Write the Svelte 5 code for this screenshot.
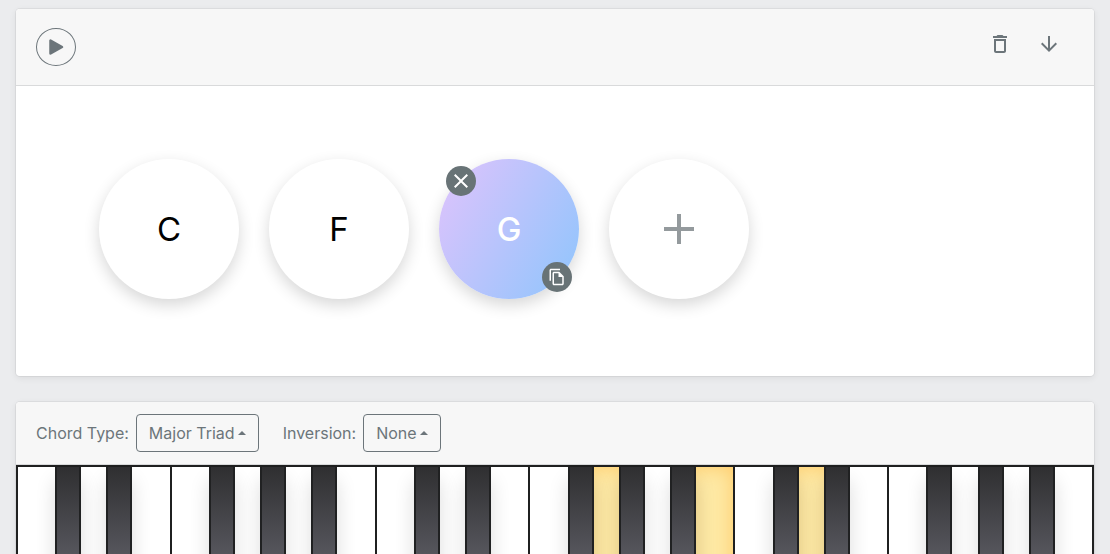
<script lang="ts">
	type Chord = { root: string; notes: number[] }

	const whiteKeys = Array.from({ length: 21 }, (_, i) => i)
	const chordTypes = ['Major Triad', 'Minor Triad', 'Diminished', 'Augmented']
	const inversions = ['None', 'First', 'Second']

	let chords: Chord[] = $state([
		{ root: 'C', notes: [7, 9, 11] },
		{ root: 'F', notes: [10, 12, 14] },
		{ root: 'G', notes: [11, 13, 15] }
	])
	let selected = $state(2)
	let chordType = $state('Major Triad')
	let inversion = $state('None')

	let activeNotes = $derived(chords[selected]?.notes ?? [])

	// E and B have no sharp
	const hasSharp = (key: number) => key % 7 !== 2 && key % 7 !== 6

	function add() {
		chords.push({ root: 'C', notes: [7, 9, 11] })
	}

	function remove(index: number) {
		chords.splice(index, 1)
		selected = Math.max(0, index - 1)
	}

	function duplicate(index: number) {
		chords.splice(index + 1, 0, { ...chords[index] })
	}
</script>

<main>
	<section class="card">
		<header class="toolbar">
			<button class="play" aria-label="Play">
				<svg width="16" height="18" viewBox="0 0 16 18">
					<path d="M2.500 2.500v13L14 9z" fill="currentColor" stroke="currentColor" stroke-width="2.500" stroke-linejoin="round" />
				</svg>
			</button>
			<div class="actions">
				<button class="icon" aria-label="Delete">
					<svg width="24" height="24" viewBox="0 0 24 24" fill="currentColor">
						<path d="M6 19c0 1.100.9 2 2 2h8c1.100 0 2-.9 2-2V7H6v12zM8 9h8v10H8V9zm7.500-5-1-1h-5l-1 1H5v2h14V4z" />
					</svg>
				</button>
				<button class="icon" aria-label="Move down">
					<svg width="24" height="24" viewBox="0 0 24 24" fill="currentColor">
						<path d="m20 12-1.410-1.410L13 16.170V4h-2v12.170l-5.580-5.590L4 12l8 8z" />
					</svg>
				</button>
			</div>
		</header>
		<div class="chords">
			{#each chords as chord, i}
				<div class="chord">
					<button class="circle" class:selected={i === selected} onclick={() => (selected = i)}>{chord.root}</button>
					{#if i === selected}
						<button class="badge close" aria-label="Remove chord" onclick={() => remove(i)}>
							<svg width="24" height="24" viewBox="0 0 24 24" fill="currentColor">
								<path d="M19 6.410 17.590 5 12 10.590 6.410 5 5 6.410 10.590 12 5 17.590 6.410 19 12 13.410 17.590 19 19 17.590 13.410 12z" />
							</svg>
						</button>
						<button class="badge copy" aria-label="Duplicate chord" onclick={() => duplicate(i)}>
							<svg width="18" height="18" viewBox="0 0 24 24" fill="currentColor">
								<path d="M16 1H4c-1.100 0-2 .9-2 2v14h2V3h12V1zm-1 4H8c-1.100 0-1.990.9-1.990 2L6 21c0 1.100.89 2 1.990 2H19c1.100 0 2-.9 2-2V11l-6-6zM8 21V7h6v5h5v9H8z" />
							</svg>
						</button>
					{/if}
				</div>
			{/each}
			<button class="circle add" aria-label="Add chord" onclick={add}>
				<svg width="30" height="30" viewBox="0 0 30 30">
					<path d="M15 0v30M0 15h30" stroke="currentColor" stroke-width="4" />
				</svg>
			</button>
		</div>
	</section>

	<section class="card">
		<header class="options">
			<div class="field">
				<label for="chord-type">Chord Type:</label>
				<span class="dropdown">
					<select id="chord-type" bind:value={chordType}>
						{#each chordTypes as option}
							<option>{option}</option>
						{/each}
					</select>
				</span>
			</div>
			<div class="field">
				<label for="inversion">Inversion:</label>
				<span class="dropdown">
					<select id="inversion" bind:value={inversion}>
						{#each inversions as option}
							<option>{option}</option>
						{/each}
					</select>
				</span>
			</div>
		</header>
		<div class="piano">
			{#each whiteKeys as key}
				<div class="slot">
					<button class="white" class:active={activeNotes.includes(key)} aria-label="White key {key + 1}"></button>
					{#if hasSharp(key) && key < 20}
						<button class="black" aria-label="Black key {key + 1}"></button>
					{/if}
				</div>
			{/each}
		</div>
	</section>
</main>

<style>
	:global(body) {
		background: #ebecee;
	}

	main {
		box-sizing: border-box;
		color: #6c757a;
		display: flex;
		flex-direction: column;
		font-family: Inter, 'Liberation Sans', sans-serif;
		font-size: 16px;
		gap: 24px;
		height: 100vh;
		line-height: 24px;
		overflow: hidden;
		padding: 8px 15px 0;
	}

	button,
	select {
		box-sizing: border-box;
		color: inherit;
		cursor: pointer;
		font: inherit;
		margin: 0;
	}

	button {
		align-items: center;
		background: none;
		border: 0;
		display: flex;
		justify-content: center;
		padding: 0;
	}

	.card {
		background: #fff;
		background-clip: padding-box;
		border: 1px solid rgba(0, 0, 0, 0.05);
		border-radius: 5px;
		box-shadow: 0 2px 6px rgba(0, 0, 0, 0.06);
		flex-shrink: 0;
	}

	.toolbar,
	.options {
		background: #f7f7f7;
		border-bottom: 1px solid #d9dadb;
		border-radius: 4px 4px 0 0;
		display: flex;
	}

	.toolbar {
		justify-content: space-between;
		padding: 19px 20px;
	}

	.play {
		border: 1px solid #6c757a;
		border-radius: 50%;
		height: 38px;
		width: 40px;
	}

	.actions {
		display: flex;
		gap: 25px;
		padding-right: 13px;
	}

	.icon {
		height: 32px;
	}

	.chords {
		display: flex;
		flex-wrap: wrap;
		gap: 30px;
		padding: 73px 83px 77px;
	}

	.chord {
		position: relative;
	}

	.circle {
		background: #fff;
		border-radius: 50%;
		box-shadow: 0 6px 16px rgba(0, 0, 0, 0.16);
		color: #000;
		font-size: 33px;
		height: 140px;
		width: 140px;
	}

	.circle.selected {
		background: linear-gradient(120deg, #e0c3fc 0%, #8ec5fc 100%);
		color: #fff;
		font-weight: 500;
	}

	.circle.add {
		color: #949a9d;
	}

	.badge {
		background: #687376;
		border-radius: 50%;
		color: #fff;
		height: 30px;
		position: absolute;
		width: 30px;
	}

	.close {
		left: 7px;
		top: 7px;
	}

	.copy {
		bottom: 7px;
		right: 7px;
	}

	.options {
		flex-wrap: wrap;
		gap: 24px;
		padding: 12px 20px;
	}

	.field {
		align-items: center;
		display: flex;
		gap: 7px;
	}

	.dropdown {
		position: relative;
	}

	.dropdown::after {
		border: 4px solid transparent;
		border-bottom-color: currentColor;
		border-top: 0;
		content: '';
		pointer-events: none;
		position: absolute;
		right: 13px;
		top: 17px;
	}

	select {
		appearance: none;
		background: none;
		border: 1px solid #6c757a;
		border-radius: 4px;
		display: block;
		field-sizing: content;
		height: 38px;
		padding: 0 23px 0 12px;
	}

	.piano {
		border: 2px solid #1f2020;
		border-left: 0;
		display: grid;
		grid-template-columns: repeat(21, 1fr);
		height: 200px;
	}

	.slot {
		position: relative;
	}

	.white {
		background: #fff;
		border-left: 2px solid #1f2020;
		height: 100%;
		width: 100%;
	}

	.white.active {
		background: #fee9a5;
		box-shadow: inset 0 0 20px #ffc966;
	}

	.black {
		background: linear-gradient(#2f2f31, #56565d 88px, #66666e);
		border: 2px solid #202122;
		border-top: 0;
		box-shadow: 0 14px 20px rgba(0, 0, 0, 0.14);
		height: 120px;
		left: calc(100% - 12px);
		position: absolute;
		top: 0;
		width: 26px;
		z-index: 1;
	}
</style>
